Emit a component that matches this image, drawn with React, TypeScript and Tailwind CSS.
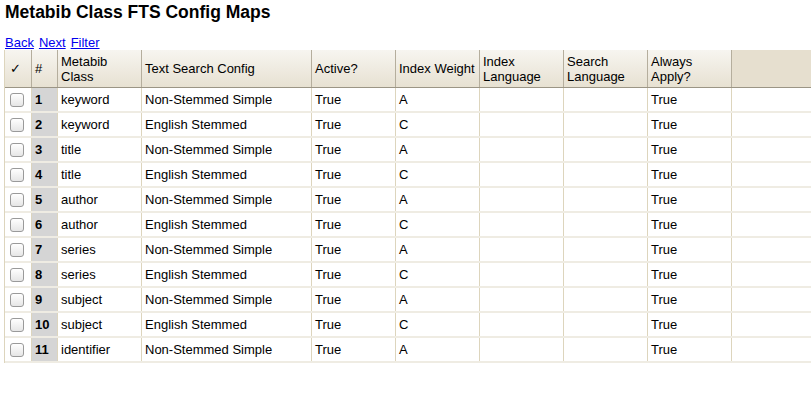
const rows = [
  ["keyword", "Non-Stemmed Simple", "A"],
  ["keyword", "English Stemmed", "C"],
  ["title", "Non-Stemmed Simple", "A"],
  ["title", "English Stemmed", "C"],
  ["author", "Non-Stemmed Simple", "A"],
  ["author", "English Stemmed", "C"],
  ["series", "Non-Stemmed Simple", "A"],
  ["series", "English Stemmed", "C"],
  ["subject", "Non-Stemmed Simple", "A"],
  ["subject", "English Stemmed", "C"],
  ["identifier", "Non-Stemmed Simple", "A"],
];

const cols = [
  { label: "✓", w: "w-[27px]" },
  { label: "#", w: "w-[26px]" },
  { label: "Metabib Class", w: "w-[84px]" },
  { label: "Text Search Config", w: "w-[170px]" },
  { label: "Active?", w: "w-[84px]" },
  { label: "Index Weight", w: "w-[84px]" },
  { label: "Index Language", w: "w-[84px]" },
  { label: "Search Language", w: "w-[84px]" },
  { label: "Always Apply?", w: "w-[84px]" },
];

function Checkbox() {
  return (
    <span className="block w-[14px] h-[14px] rounded-[3px] border border-[#9a9a9a] bg-gradient-to-b from-white to-[#e6e6e6]" />
  );
}

export default function App() {
  return (
    <div className="w-[811px] h-[394px] bg-white text-[13px] text-black font-['Liberation_Sans',Arial,sans-serif]">
      <h1 className="px-[5px] pt-[2px] h-[30px] text-[17.5px] font-bold leading-[20px]">
        Metabib Class FTS Config Maps
      </h1>
      <div className="flex gap-[5px] px-[5px] h-[20px] items-end leading-[15px]">
        <a href="#" className="text-[#0000ee] underline">Back</a>
        <a href="#" className="text-[#0000ee] underline">Next</a>
        <a href="#" className="text-[#0000ee] underline">Filter</a>
      </div>
      <div className="ml-[4px] border-l border-[#ddd5bd]">
        <div className="flex h-[38px] border-b border-[#9b9585]">
          {cols.map((c, i) => (
            <div
              key={i}
              className={`${c.w} shrink-0 flex items-center px-[3px] leading-[15px] border-r border-[#b5ae9d] bg-gradient-to-b from-[#f7f5f0] to-[#e7e1d2]`}
            >
              {i === 0 ? <span className="pl-[2px]">✓</span> : c.label}
            </div>
          ))}
          <div className="flex-1 bg-[#e6dfcf]" />
        </div>
        {rows.map((r, i) => (
          <div key={i} className="flex border-b-2 border-[#efece3]">
            <div className="w-[27px] shrink-0 h-[23px] flex items-center pl-[5px] border-r border-[#ddd5bd]">
              <Checkbox />
            </div>
            <div className="w-[26px] shrink-0 h-[23px] flex items-center px-[3px] font-bold bg-[#d5d5d5] border-r border-[#ddd5bd]">
              {i + 1}
            </div>
            <div className="w-[84px] shrink-0 h-[23px] flex items-center px-[3px] border-r border-[#ddd5bd]">{r[0]}</div>
            <div className="w-[170px] shrink-0 h-[23px] flex items-center px-[3px] border-r border-[#ddd5bd]">{r[1]}</div>
            <div className="w-[84px] shrink-0 h-[23px] flex items-center px-[3px] border-r border-[#ddd5bd]">True</div>
            <div className="w-[84px] shrink-0 h-[23px] flex items-center px-[3px] border-r border-[#ddd5bd]">{r[2]}</div>
            <div className="w-[84px] shrink-0 h-[23px] border-r border-[#ddd5bd]" />
            <div className="w-[84px] shrink-0 h-[23px] border-r border-[#ddd5bd]" />
            <div className="w-[84px] shrink-0 h-[23px] flex items-center px-[3px] border-r border-[#ddd5bd]">True</div>
            <div className="flex-1" />
          </div>
        ))}
      </div>
    </div>
  );
}
